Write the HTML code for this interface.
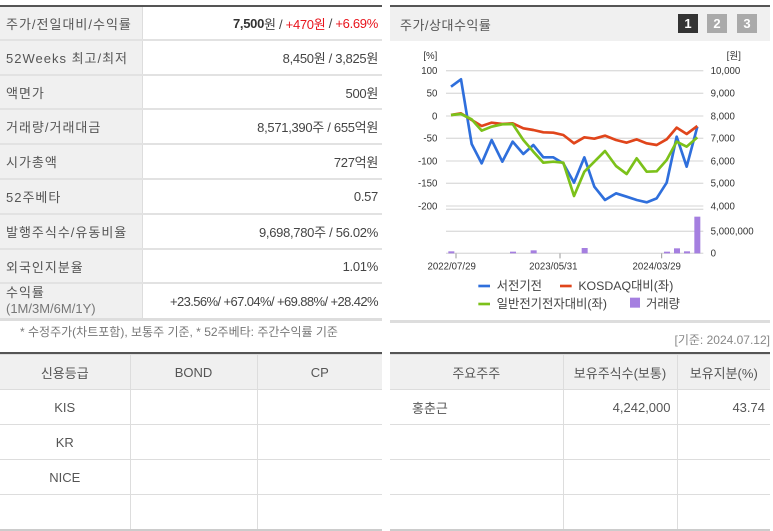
<!DOCTYPE html>
<html><head><meta charset="utf-8"><style>
*{margin:0;padding:0;box-sizing:border-box}
body{width:773px;height:529px;background:#fff;font-family:"Liberation Sans","Noto Sans CJK KR",sans-serif;color:#444;font-size:13px;position:relative;overflow:hidden}
.a{position:absolute}
.row{position:absolute;left:0;width:382px;border-bottom:2px solid #e2e2e2}
.row .l{position:absolute;left:0;top:0;bottom:0;width:143px;background:#f0f0f0;border-right:1px solid #ddd;padding-left:6px;display:flex;align-items:center;color:#555;letter-spacing:1px}
.row .v{position:absolute;right:4px;top:0;bottom:0;display:flex;align-items:center;color:#444;letter-spacing:-0.3px}
.r{color:#e8141c}
table{border-collapse:collapse;position:absolute;table-layout:fixed}
td,th{border:1px solid #ddd;font-weight:normal;font-size:13px;color:#555;height:35px}
th{background:#f0f0f0;height:35px}
</style></head><body>
<div class="a" style="left:0;top:5px;width:382px;height:2px;background:#555"></div>
<div class="row" style="top:7px;height:34px"><div class="l">주가/전일대비/수익률</div><div class="v"><b style="color:#333">7,500</b>원&nbsp;/&nbsp;<span class="r">+470원</span>&nbsp;/&nbsp;<span class="r">+6.69%</span></div></div>
<div class="row" style="top:41px;height:35px"><div class="l">52Weeks 최고/최저</div><div class="v">8,450원 / 3,825원</div></div>
<div class="row" style="top:76px;height:34px"><div class="l">액면가</div><div class="v">500원</div></div>
<div class="row" style="top:110px;height:35px"><div class="l">거래량/거래대금</div><div class="v">8,571,390주 / 655억원</div></div>
<div class="row" style="top:145px;height:35px"><div class="l">시가총액</div><div class="v">727억원</div></div>
<div class="row" style="top:180px;height:35px"><div class="l">52주베타</div><div class="v">0.57</div></div>
<div class="row" style="top:215px;height:35px"><div class="l">발행주식수/유동비율</div><div class="v">9,698,780주 / 56.02%</div></div>
<div class="row" style="top:250px;height:34px"><div class="l">외국인지분율</div><div class="v">1.01%</div></div>
<div class="row" style="top:284px;height:37px;border-bottom:3px solid #ddd"><div class="l" style="flex-direction:column;align-items:flex-start;justify-content:center;line-height:16px">수익률<span style="font-size:13px;color:#777;letter-spacing:0">(1M/3M/6M/1Y)</span></div><div class="v r" style="font-size:13px;letter-spacing:-0.6px">+23.56%/ +67.04%/ +69.88%/ +28.42%</div></div>
<div class="a" style="left:20px;top:323px;font-size:12px;color:#777">* 수정주가(차트포함), 보통주 기준, * 52주베타: 주간수익률 기준</div>

<div class="a" style="left:0;top:352px;width:382px;height:2px;background:#555"></div>
<table style="left:0;top:354px;width:382px">
<tr><th style="width:130px;border-left:none">신용등급</th><th style="width:127px">BOND</th><th style="border-right:none">CP</th></tr>
<tr><td style="text-align:center;border-left:none">KIS</td><td></td><td style="border-right:none"></td></tr>
<tr><td style="text-align:center;border-left:none">KR</td><td></td><td style="border-right:none"></td></tr>
<tr><td style="text-align:center;border-left:none">NICE</td><td></td><td style="border-right:none"></td></tr>
<tr><td style="border-left:none;border-bottom:2px solid #ccc"></td><td style="border-bottom:2px solid #ccc"></td><td style="border-right:none;border-bottom:2px solid #ccc"></td></tr>
</table>

<div class="a" style="left:390px;top:5px;width:380px;height:2px;background:#555"></div>
<div class="a" style="left:390px;top:7px;width:380px;height:34px;background:#f0f0f0"></div>
<div class="a" style="left:400px;top:15px;color:#555;letter-spacing:0.5px">주가/상대수익률</div>
<div class="a" style="left:678px;top:14px;width:20px;height:19px;background:#333;color:#fff;font-weight:bold;text-align:center;line-height:19px">1</div>
<div class="a" style="left:707px;top:14px;width:20px;height:19px;background:#aaa;color:#fff;font-weight:bold;text-align:center;line-height:19px">2</div>
<div class="a" style="left:737px;top:14px;width:20px;height:19px;background:#aaa;color:#fff;font-weight:bold;text-align:center;line-height:19px">3</div>

<svg class="a" style="left:390px;top:0" width="383" height="320" viewBox="0 0 1149 960" font-family="Liberation Sans" font-size="29" fill="#333">
<g stroke="#ddd" stroke-width="4">
<line x1="168" y1="212" x2="940" y2="212"/><line x1="168" y1="280" x2="940" y2="280"/><line x1="168" y1="348" x2="940" y2="348"/><line x1="168" y1="415" x2="940" y2="415"/><line x1="168" y1="483" x2="940" y2="483"/><line x1="168" y1="550" x2="940" y2="550"/><line x1="168" y1="618" x2="940" y2="618"/><line x1="168" y1="628" x2="940" y2="628"/><line x1="168" y1="694" x2="940" y2="694"/><line x1="168" y1="760" x2="940" y2="760"/>
</g>
<g stroke="#999" stroke-width="3"><line x1="198" y1="760" x2="198" y2="775"/><line x1="510" y1="760" x2="510" y2="775"/><line x1="815" y1="760" x2="815" y2="775"/></g>
<g text-anchor="end"><text x="142" y="177">[%]</text><text x="142" y="222">100</text><text x="142" y="290">50</text><text x="142" y="358">0</text><text x="142" y="425">-50</text><text x="142" y="493">-100</text><text x="142" y="560">-150</text><text x="142" y="628">-200</text></g>
<g><text x="1010" y="177">[원]</text><text x="962" y="222">10,000</text><text x="962" y="290">9,000</text><text x="962" y="358">8,000</text><text x="962" y="425">7,000</text><text x="962" y="493">6,000</text><text x="962" y="560">5,000</text><text x="962" y="628">4,000</text><text x="962" y="704">5,000,000</text><text x="962" y="770">0</text></g>
<g text-anchor="middle"><text x="185" y="808">2022/07/29</text><text x="490" y="808">2023/05/31</text><text x="800" y="808">2024/03/29</text></g>
<g fill="#a57fe0"><rect x="175" y="754" width="18" height="6"/><rect x="360" y="755" width="18" height="5"/><rect x="422" y="751" width="18" height="9"/><rect x="575" y="744" width="18" height="16"/><rect x="822" y="755" width="18" height="5"/><rect x="852" y="745" width="18" height="15"/><rect x="882" y="754" width="18" height="6"/><rect x="913" y="650" width="18" height="110"/></g>
<g fill="none" stroke-width="8" stroke-linejoin="round">
<polyline stroke="#2f6fdc" points="183,260 213,238 245,432 275,490 305,420 337,485 368,425 400,462 430,435 460,472 490,472 520,490 552,548 583,472 613,560 645,600 678,580 710,590 740,600 770,607 800,595 830,548 860,410 890,500 922,380"/>
<polyline stroke="#e0451b" points="183,345 213,340 245,360 275,378 305,368 337,372 368,370 400,385 430,390 460,397 490,398 520,405 552,430 583,412 613,416 645,407 678,420 710,428 740,418 770,430 800,435 830,418 860,383 890,402 922,378"/>
<polyline stroke="#7cc11a" points="183,345 213,342 245,358 275,392 305,380 337,373 368,372 400,420 430,455 460,488 490,485 520,488 552,588 583,515 613,485 645,453 678,498 710,522 740,475 770,515 800,514 830,480 860,425 890,440 922,412"/>
</g>
<g font-size="37" fill="#444">
<line x1="265" y1="858" x2="300" y2="858" stroke="#2f6fdc" stroke-width="8"/><text x="320" y="870">서전기전</text>
<line x1="510" y1="858" x2="545" y2="858" stroke="#e0451b" stroke-width="8"/><text x="565" y="870">KOSDAQ대비(좌)</text>
<line x1="265" y1="912" x2="300" y2="912" stroke="#7cc11a" stroke-width="8"/><text x="320" y="924">일반전기전자대비(좌)</text>
<rect x="720" y="893" width="30" height="30" fill="#a57fe0"/><text x="768" y="924">거래량</text>
</g>
</svg>
<div class="a" style="left:390px;top:320px;width:380px;height:3px;background:#ddd"></div>
<div class="a" style="right:3px;top:331px;font-size:12px;color:#888">[기준: 2024.07.12]</div>

<div class="a" style="left:390px;top:352px;width:380px;height:2px;background:#555"></div>
<table style="left:390px;top:354px;width:380px">
<tr><th style="width:173px;border-left:none">주요주주</th><th style="width:114px">보유주식수(보통)</th><th style="border-right:none">보유지분(%)</th></tr>
<tr><td style="border-left:none;padding-left:22px">홍춘근</td><td style="text-align:right;padding-right:6px">4,242,000</td><td style="text-align:right;padding-right:5px;border-right:none">43.74</td></tr>
<tr><td style="border-left:none"></td><td></td><td style="border-right:none"></td></tr>
<tr><td style="border-left:none"></td><td></td><td style="border-right:none"></td></tr>
<tr><td style="border-left:none;border-bottom:2px solid #ccc"></td><td style="border-bottom:2px solid #ccc"></td><td style="border-right:none;border-bottom:2px solid #ccc"></td></tr>
</table>
</body></html>
